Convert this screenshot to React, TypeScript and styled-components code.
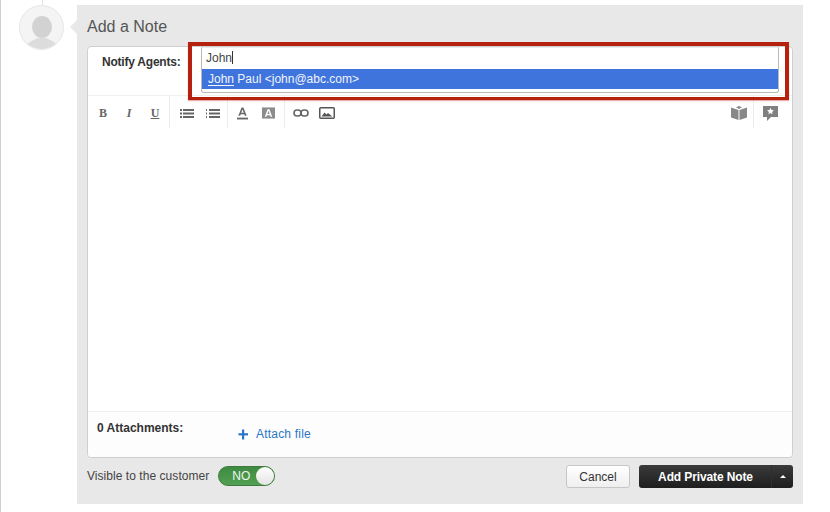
import styled, { createGlobalStyle } from 'styled-components';

const GlobalStyle = createGlobalStyle`
  html, body {
    margin: 0;
    padding: 0;
    background: #fff;
    font-family: "Liberation Sans", Arial, sans-serif;
  }
`;

const Page = styled.div`
  width: 830px;
  height: 512px;
  box-sizing: border-box;
  border-left: 1px solid #cfcfcf;
  padding: 5px 0 0 18px;
  display: flex;
  align-items: flex-start;
  overflow: hidden;
`;

const AvatarSlot = styled.div`
  position: relative;
  flex: none;
  margin-right: 13px;

  &::before {
    content: '';
    position: absolute;
    left: 23px;
    top: -5px;
    width: 1px;
    height: 5px;
    background: #e4e4e4;
  }
`;

const Avatar = styled.div`
  width: 45px;
  height: 45px;
  box-sizing: border-box;
  border-radius: 50%;
  border: 1px solid #e6e6e6;
  background: #f4f4f4;
  overflow: hidden;
`;

const Card = styled.section`
  position: relative;
  width: 726px;
  height: 499px;
  box-sizing: border-box;
  background: #e8e8e8;
  padding: 0 10px;
  display: flex;
  flex-direction: column;

  &::before {
    content: '';
    position: absolute;
    left: -7px;
    top: 15px;
    border-style: solid;
    border-width: 7px 7px 7px 0;
    border-color: transparent #e8e8e8 transparent transparent;
  }
`;

const Title = styled.h2`
  margin: 0;
  height: 41px;
  line-height: 44px;
  font-size: 16px;
  font-weight: 400;
  color: #555;
`;

const Editor = styled.div`
  position: relative;
  height: 412px;
  box-sizing: border-box;
  background: #fff;
  border: 1px solid #cfcfcf;
  border-radius: 4px;
  display: flex;
  flex-direction: column;
`;

const NotifyRow = styled.div`
  height: 49px;
  flex: none;
  box-sizing: border-box;
  border-bottom: 1px solid #efefef;
  padding-left: 14px;
  display: flex;
  align-items: flex-start;
`;

const NotifyLabel = styled.label`
  width: 99px;
  flex: none;
  margin-top: 8px;
  line-height: 14px;
  font-size: 12px;
  font-weight: 700;
  letter-spacing: -0.22px;
  color: #333;
`;

const Picker = styled.div`
  width: 578px;
  height: 46px;
  flex: none;
  box-sizing: border-box;
  border: 1px solid #b9b9b9;
  border-top-color: #ececec;
  border-radius: 0 0 3px 3px;
  background: #fff;
`;

const PickerInput = styled.div`
  height: 21px;
  box-sizing: border-box;
  padding-left: 4px;
  line-height: 20px;
  font-size: 12px;
  color: #444;
`;

const Caret = styled.span`
  display: inline-block;
  width: 1px;
  height: 13px;
  background: #333;
  vertical-align: -2px;
`;

const Suggestion = styled.div`
  height: 20px;
  padding-left: 6px;
  background: #3f74dc;
  color: #f2f5fd;
  line-height: 20px;
  font-size: 12px;

  u {
    text-underline-offset: 2px;
  }
`;

const Toolbar = styled.div`
  height: 32px;
  flex: none;
  display: flex;
  align-items: stretch;
`;

const ToolGroup = styled.div<{ $width: number; $pad?: number; $plain?: boolean }>`
  width: ${p => p.$width}px;
  flex: none;
  box-sizing: border-box;
  padding: 8px 0 0 ${p => p.$pad ?? 0}px;
  border-right: ${p => (p.$plain ? 'none' : '1px solid #ececec')};
  display: flex;
  align-items: flex-start;
`;

const ToolSpacer = styled.div`
  flex: 1;
`;

const ToolIcon = styled.span<{ $width?: number }>`
  width: ${p => p.$width ?? 26}px;
  height: 18px;
  flex: none;
  display: flex;
  align-items: center;
  justify-content: center;
  color: #666;
`;

const Letter = styled.span<{ $italic?: boolean; $under?: boolean }>`
  font-family: "Liberation Serif", "Times New Roman", serif;
  font-size: 12px;
  font-weight: 700;
  color: #666;
  font-style: ${p => (p.$italic ? 'italic' : 'normal')};
  text-decoration: ${p => (p.$under ? 'underline' : 'none')};
`;

const Body = styled.div`
  flex: 1;
`;

const Attachments = styled.div`
  height: 46px;
  flex: none;
  box-sizing: border-box;
  background: #fdfdfd;
  border-top: 1px solid #efefef;
  border-radius: 0 0 4px 4px;
  padding-left: 9px;
  display: flex;
  align-items: flex-start;
`;

const AttachLabel = styled.span`
  width: 141px;
  flex: none;
  margin-top: 9px;
  line-height: 14px;
  font-size: 12px;
  font-weight: 700;
  color: #333;
`;

const AttachLink = styled.a`
  margin-top: 15px;
  display: flex;
  align-items: center;
  gap: 7px;
  line-height: 14px;
  font-size: 12px;
  letter-spacing: 0.2px;
  color: #2a76c6;
`;

const Footer = styled.div`
  flex: 1;
  padding-top: 7px;
  display: flex;
  align-items: flex-start;
`;

const VisibleLabel = styled.span`
  margin-top: 4px;
  margin-right: 9px;
  line-height: 14px;
  font-size: 12px;
  letter-spacing: 0.05px;
  color: #444;
`;

const Toggle = styled.div`
  position: relative;
  width: 57px;
  height: 20px;
  margin-top: 1px;
  box-sizing: border-box;
  border-radius: 10px;
  border: 1px solid #3d7a3e;
  background: linear-gradient(#3f8a41, #51a053);
  padding-left: 13px;
  line-height: 19px;
  font-size: 12px;
  color: #eef6ee;

  &::after {
    content: '';
    position: absolute;
    right: 0;
    top: 0;
    width: 18px;
    height: 18px;
    border-radius: 50%;
    background: linear-gradient(#fff, #e4e4e4);
  }
`;

const Actions = styled.div`
  margin-left: auto;
  display: flex;
  gap: 9px;
`;

const CancelButton = styled.button`
  width: 64px;
  height: 23px;
  padding: 0;
  border: 1px solid #c6c6c6;
  border-radius: 3px;
  background: linear-gradient(#fff, #efefef);
  font: 12px "Liberation Sans", Arial, sans-serif;
  color: #333;
`;

const SplitButton = styled.div`
  width: 154px;
  height: 23px;
  border-radius: 3px;
  background: linear-gradient(#3a3a3a, #1e1e1e);
  display: flex;
  align-items: stretch;
  color: #fff;
`;

const SplitMain = styled.button`
  flex: 1;
  padding: 0 0 0 1px;
  border: 0;
  border-right: 1px solid #303030;
  background: none;
  font: 700 12px "Liberation Sans", Arial, sans-serif;
  letter-spacing: -0.12px;
  color: #fff;
`;

const SplitCaret = styled.span`
  width: 21px;
  flex: none;
  display: flex;
  align-items: center;
  justify-content: center;

  &::after {
    content: '';
    border-style: solid;
    border-width: 0 3px 3px;
    border-color: transparent transparent #fff;
  }
`;

const Highlight = styled.div`
  position: absolute;
  left: 100px;
  top: -5px;
  width: 601px;
  height: 58px;
  box-sizing: border-box;
  border: 4px solid #b5200f;
  border-bottom-width: 3px;
  box-shadow: 0 1px 1px rgba(181, 32, 15, 0.35);
  pointer-events: none;
`;

const ListIcon = ({ numbered }: { numbered?: boolean }) => (
  <svg width="14" height="9" viewBox="0 0 14 9" fill="currentColor">
    <rect x="0" y="0" width={numbered ? 1 : 2} height="2" />
    <rect x="0" y="3.5" width={numbered ? 1 : 2} height="2" />
    <rect x="0" y="7" width={numbered ? 1 : 2} height="2" />
    <rect x="3" y="0" width="11" height="2" />
    <rect x="3" y="3.5" width="11" height="2" />
    <rect x="3" y="7" width="11" height="2" />
  </svg>
);

const App = () => (
  <>
    <GlobalStyle />
    <Page>
      <AvatarSlot>
        <Avatar>
          <svg width="43" height="43" viewBox="0 0 43 43">
            <ellipse cx="22" cy="21" rx="10" ry="11" fill="#d2d2d2" />
            <path d="M7 40c1-4 7-6 11-8h8c4 2 10 4 11 8-4 2-9 3-15 3s-11-1-15-3z" fill="#dcdcdc" />
          </svg>
        </Avatar>
      </AvatarSlot>
      <Card>
        <Title>Add a Note</Title>
        <Editor>
          <NotifyRow>
            <NotifyLabel>Notify Agents:</NotifyLabel>
            <Picker>
              <PickerInput>John<Caret /></PickerInput>
              <Suggestion><u>John</u> Paul &lt;john@abc.com&gt;</Suggestion>
            </Picker>
          </NotifyRow>
          <Toolbar>
            <ToolGroup $width={82} $pad={2}>
              <ToolIcon><Letter>B</Letter></ToolIcon>
              <ToolIcon><Letter $italic>I</Letter></ToolIcon>
              <ToolIcon><Letter $under>U</Letter></ToolIcon>
            </ToolGroup>
            <ToolGroup $width={58} $pad={4}>
              <ToolIcon><ListIcon /></ToolIcon>
              <ToolIcon><ListIcon numbered /></ToolIcon>
            </ToolGroup>
            <ToolGroup $width={57} $pad={1}>
              <ToolIcon>
                <svg width="11" height="13" viewBox="0 0 12 13" fill="#666">
                  <path d="M5 0h2l3.5 9H8.6L8 7.3H4L3.4 9H1.5zM4.6 5.8h2.8L6 2.2z" />
                  <rect x="0" y="11" width="12" height="2" />
                </svg>
              </ToolIcon>
              <ToolIcon>
                <svg width="13" height="12" viewBox="0 0 14 12">
                  <rect width="14" height="12" fill="#8c8c8c" />
                  <path d="M6 2h2l3 8H9.2l-.5-1.6H5.3L4.8 10H3zM5.8 7h2.4L7 3.6z" fill="#fff" />
                </svg>
              </ToolIcon>
            </ToolGroup>
            <ToolGroup $width={60} $pad={3} $plain>
              <ToolIcon>
                <svg width="16" height="9" viewBox="0 0 16 9" fill="none" stroke="#666" strokeWidth="1.6">
                  <rect x="1" y="1" width="7" height="6" rx="3" />
                  <rect x="8" y="1" width="7" height="6" rx="3" />
                </svg>
              </ToolIcon>
              <ToolIcon>
                <svg width="16" height="12" viewBox="0 0 16 12">
                  <rect x="0.75" y="0.75" width="14.5" height="10.5" rx="1" fill="#fff" stroke="#555" strokeWidth="1.5" />
                  <path d="M2.5 9.5l3-4 2 2 1.5-1.5 4.5 3.5z" fill="#555" />
                </svg>
              </ToolIcon>
            </ToolGroup>
            <ToolSpacer />
            <ToolGroup $width={30}>
              <ToolIcon $width={29}>
                <svg width="16" height="14" viewBox="0 0 16 14" fill="#888">
                  <path d="M0 1.5l7.5 2.5V14L0 11.5zM16 1.5L8.5 4V14L16 11.5zM8 3L5 1.3 8 0l3 1.3z" />
                </svg>
              </ToolIcon>
            </ToolGroup>
            <ToolGroup $width={38} $plain>
              <ToolIcon $width={33}>
                <svg width="15" height="15" viewBox="0 0 15 15">
                  <path d="M0 0h15v11H8l-4 4v-4H0z" fill="#808080" />
                  <path d="M7.5 1.8l1 2.2 2.4.3-1.8 1.6.5 2.4-2.1-1.2-2.1 1.2.5-2.4-1.8-1.6 2.4-.3z" fill="#fff" />
                </svg>
              </ToolIcon>
            </ToolGroup>
          </Toolbar>
          <Body />
          <Attachments>
            <AttachLabel>0 Attachments:</AttachLabel>
            <AttachLink>
              <svg width="11" height="11" viewBox="0 0 11 11" fill="#2a76c6">
                <rect x="4" y="0.5" width="2.2" height="10" />
                <rect x="0.5" y="4.2" width="9.5" height="2.2" />
              </svg>
              Attach file
            </AttachLink>
          </Attachments>
          <Highlight />
        </Editor>
        <Footer>
          <VisibleLabel>Visible to the customer</VisibleLabel>
          <Toggle>NO</Toggle>
          <Actions>
            <CancelButton>Cancel</CancelButton>
            <SplitButton>
              <SplitMain>Add Private Note</SplitMain>
              <SplitCaret />
            </SplitButton>
          </Actions>
        </Footer>
      </Card>
    </Page>
  </>
);

export default App;
